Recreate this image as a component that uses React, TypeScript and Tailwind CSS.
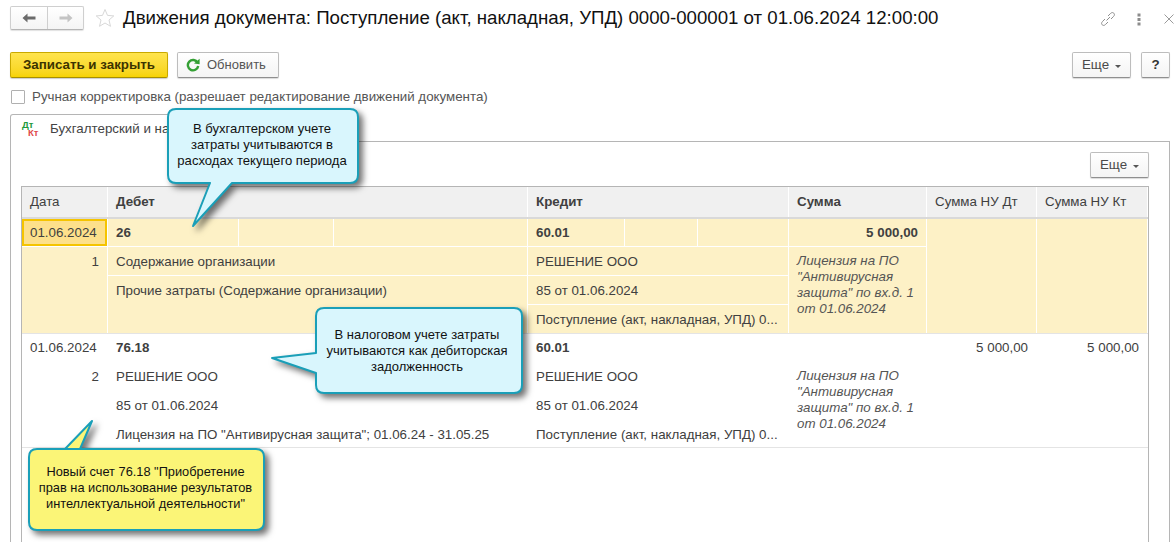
import React from "react";

const font = "[font-family:'Liberation_Sans',Arial,sans-serif]";

function Btn({ children, className = "" }: { children: React.ReactNode; className?: string }) {
  return (
    <div className={`flex h-[26px] items-center justify-center rounded-[2px] border border-[#bdbdbd] border-b-[#8f8f8f] bg-gradient-to-b from-white to-[#f4f4f4] text-[13.33px] text-[#4a4a4a] shadow-[0_1px_1px_rgba(0,0,0,0.15)] ${className}`}>
      {children}
    </div>
  );
}

function More({ className = "" }: { className?: string }) {
  return (
    <Btn className={`w-[59px] gap-[6px] ${className}`}>
      <span>Еще</span>
      <span className="mt-[2px] h-0 w-0 border-x-[3px] border-t-[3px] border-x-transparent border-t-[#555]" />
    </Btn>
  );
}

const Y = "bg-[#fdf1c6]";
const cellBase = "flex items-center px-[8px] text-[13.33px] text-[#404040] whitespace-nowrap overflow-hidden";

function Cell({ bg, className = "", children }: { bg: string; className?: string; children?: React.ReactNode }) {
  return <div className={`${cellBase} ${bg} ${className}`}>{children}</div>;
}

const cols = "grid grid-cols-[85px_419px_260px_137px_109px_110px] gap-x-px gap-y-px";

type RowData = {
  bg: string;
  rowsClass: string;
  num: string;
  date: React.ReactNode;
  debit: string;
  credit: string;
  sum: React.ReactNode;
  sumDt: string;
  sumKt: string;
  d: string[];
  c: string[];
  split: boolean;
};

function Note() {
  return (
    <p className="text-[13.33px] leading-[16px] italic text-[#555] whitespace-normal">
      Лицензия на ПО "Антивирусная защита" по вх.д. 1 от 01.06.2024
    </p>
  );
}

function Row({ r }: { r: RowData }) {
  const bg = r.bg;
  return (
    <div className={`${cols} ${r.rowsClass} border-b border-[#e4e4e4] bg-white`}>
      {r.date}
      {r.split ? (
        <div className="grid grid-cols-[130px_94px_193px] gap-x-px">
          <Cell bg={bg} className="font-bold">{r.debit}</Cell>
          <Cell bg={bg} />
          <Cell bg={bg} />
        </div>
      ) : (
        <Cell bg={bg} className="font-bold">{r.debit}</Cell>
      )}
      {r.split ? (
        <div className="grid grid-cols-[96px_72px_90px] gap-x-px">
          <Cell bg={bg} className="font-bold">{r.credit}</Cell>
          <Cell bg={bg} />
          <Cell bg={bg} />
        </div>
      ) : (
        <Cell bg={bg} className="font-bold">{r.credit}</Cell>
      )}
      {r.sum}
      {r.split ? (
        <>
          <Cell bg={bg} className="row-span-4" />
          <Cell bg={bg} className="row-span-4" />
        </>
      ) : (
        <>
          <Cell bg={bg} className="justify-end">{r.sumDt}</Cell>
          <Cell bg={bg} className="justify-end">{r.sumKt}</Cell>
        </>
      )}
      <Cell bg={bg} className="row-span-3 items-start justify-end pt-[5px]">{r.num}</Cell>
      <Cell bg={bg} className="col-start-2 pt-[2px]">{r.d[0]}</Cell>
      <Cell bg={bg} className="pt-[2px]">{r.c[0]}</Cell>
      <Cell bg={bg} className="row-span-3 col-start-4 items-start pt-[6px]"><Note /></Cell>
      {!r.split && <Cell bg={bg} className="row-span-3" />}
      {!r.split && <Cell bg={bg} className="row-span-3" />}
      {r.split ? (
        <Cell bg={bg} className="col-start-2 row-span-2 items-start pt-[5px]">{r.d[1]}</Cell>
      ) : (
        <Cell bg={bg} className="col-start-2 pt-[2px]">{r.d[1]}</Cell>
      )}
      <Cell bg={bg} className="col-start-3 pt-[2px]">{r.c[1]}</Cell>
      {!r.split && <Cell bg={bg} className="col-start-2 pt-[2px]">{r.d[2]}</Cell>}
      <Cell bg={bg} className="col-start-3 pt-[2px]">{r.c[2]}</Cell>
    </div>
  );
}

function Callout({ className, w, h, path, fill, children, textClass }: {
  className: string; w: number; h: number; path: string; fill: string; children: React.ReactNode; textClass: string;
}) {
  return (
    <div className={`absolute ${className}`}>
      <svg width={w} height={h} viewBox={`0 0 ${w} ${h}`} className="block overflow-visible drop-shadow-[4px_4px_3px_rgba(0,0,0,0.55)]">
        <path d={path} fill={fill} stroke="#1a9fb8" strokeWidth="2" strokeLinejoin="round" />
      </svg>
      <div className={`absolute text-center leading-[16.2px] text-[#111] ${textClass}`}>{children}</div>
    </div>
  );
}

export default function App() {
  const rows: RowData[] = [
    {
      bg: Y,
      rowsClass: "grid-rows-[27px_28px_28px_28px]",
      num: "1",
      date: (
        <div className="flex items-center border-2 border-[#f5c400] bg-[#fde08b] pl-[6px] text-[13.33px] text-[#404040]">01.06.2024</div>
      ),
      debit: "26",
      credit: "60.01",
      sum: <Cell bg={Y} className="justify-end font-bold">5 000,00</Cell>,
      sumDt: "",
      sumKt: "",
      d: ["Содержание организации", "Прочие затраты (Содержание организации)"],
      c: ["РЕШЕНИЕ ООО", "85 от 01.06.2024", "Поступление (акт, накладная, УПД) 0..."],
      split: true,
    },
    {
      bg: "bg-white",
      rowsClass: "grid-rows-[27px_28px_28px_27px]",
      num: "2",
      date: <Cell bg="bg-white">01.06.2024</Cell>,
      debit: "76.18",
      credit: "60.01",
      sum: <Cell bg="bg-white" />,
      sumDt: "5 000,00",
      sumKt: "5 000,00",
      d: ["РЕШЕНИЕ ООО", "85 от 01.06.2024", 'Лицензия на ПО "Антивирусная защита"; 01.06.24 - 31.05.25'],
      c: ["РЕШЕНИЕ ООО", "85 от 01.06.2024", "Поступление (акт, накладная, УПД) 0..."],
      split: false,
    },
  ];

  return (
    <div className={`relative h-[542px] w-[1176px] overflow-hidden bg-white ${font}`}>
      {/* title bar */}
      <header className="flex h-[36px] items-start pl-[10px] pt-[6px]">
        <div className="flex h-[24px] w-[74px] rounded-[2px] border border-[#cfcfcf] border-b-[#b5b5b5] bg-gradient-to-b from-white to-[#f4f4f4] shadow-[0_1px_1px_rgba(0,0,0,0.12)]">
          <div className="flex w-[37px] items-center justify-center border-r border-[#cfcfcf]">
            <svg width="14" height="10" viewBox="0 0 14 10"><path d="M0.5 5 L5.5 0.5 V3.4 H13.5 V6.6 H5.5 V9.5 Z" fill="#6b6b6b" /></svg>
          </div>
          <div className="flex flex-1 items-center justify-center">
            <svg width="14" height="10" viewBox="0 0 14 10"><path d="M13.5 5 L8.5 0.5 V3.4 H0.5 V6.6 H8.5 V9.5 Z" fill="#c4c4c4" /></svg>
          </div>
        </div>
        <svg width="20" height="20" viewBox="0 0 20 20" className="ml-[11px] mt-[2px]">
          <path d="M10 1.5 L12.5 7.4 L18.8 7.9 L14 12 L15.5 18.3 L10 15 L4.5 18.3 L6 12 L1.2 7.9 L7.5 7.4 Z" fill="none" stroke="#d8d8d8" strokeWidth="1" />
        </svg>
        <h1 className="ml-[8px] mt-[1px] whitespace-nowrap text-[18.67px] leading-[22px] font-normal text-[#111]">
          Движения документа: Поступление (акт, накладная, УПД) 0000-000001 от 01.06.2024 12:00:00
        </h1>
        <div className="ml-auto flex items-center pr-[2px] pt-[5px]">
          <svg width="16" height="16" viewBox="0 0 16 16" fill="none" stroke="#8f8f8f" strokeWidth="1">
            <path d="M6.5 9.5 L10 6 M5 8 L2.6 10.4 C1.2 11.8 1.4 13 2.2 13.8 C3 14.6 4.3 14.8 5.6 13.4 L8 11 M8 5 L10.4 2.6 C11.8 1.2 13 1.4 13.8 2.2 C14.6 3 14.8 4.3 13.4 5.6 L11 8" />
          </svg>
          <svg width="4" height="13" viewBox="0 0 4 13" fill="#8c8c8c" className="ml-[21px]"><rect x="0.5" y="0.5" width="3" height="3" /><rect x="0.5" y="5" width="3" height="3" /><rect x="0.5" y="9.5" width="3" height="3" /></svg>
          <svg width="10" height="10" viewBox="0 0 10 10" stroke="#9a9a9a" strokeWidth="1" className="ml-[23px]"><path d="M0.5 0.5 L9.5 9.5 M9.5 0.5 L0.5 9.5" /></svg>
        </div>
      </header>

      {/* toolbar */}
      <div className="mt-[16px] flex h-[26px] items-center pl-[10px] pr-[6px]">
        <div className="flex h-[26px] w-[158px] items-center justify-center rounded-[2px] border border-[#c9a900] border-b-[#a88f00] bg-gradient-to-b from-[#ffe44d] to-[#f7d300] text-[13.33px] font-bold text-[#3c3300] shadow-[0_1px_1px_rgba(0,0,0,0.2)]">
          Записать и закрыть
        </div>
        <Btn className="ml-[9px] w-[102px] justify-start gap-[7px] pl-[8px]">
          <svg width="14" height="14" viewBox="0 0 14 14" fill="none">
            <path d="M11.6 4.6 A5.2 5.2 0 1 0 12.2 8" stroke="#35a035" strokeWidth="2.4" />
            <path d="M8 5.6 L13.6 6.2 L13.6 0.8 Z" fill="#35a035" />
          </svg>
          <span className="text-[13px] text-[#555]">Обновить</span>
        </Btn>
        <More className="ml-auto" />
        <Btn className="ml-[10px] w-[29px] font-bold text-[#333]">?</Btn>
      </div>

      {/* manual checkbox */}
      <div className="mt-[10px] flex h-[18px] items-center gap-[7px] pl-[11px]">
        <span className="h-[14px] w-[14px] rounded-[1px] border border-[#b0b0b0] bg-white" />
        <span className="text-[13.33px] text-[#555]">Ручная корректировка (разрешает редактирование движений документа)</span>
      </div>

      {/* tab */}
      <div className="relative mt-[8px] -mb-px ml-[10px] flex h-[28px] w-[300px] items-center rounded-t-[3px] border border-b-0 border-[#b5b5b5] bg-white pl-[11px]">
        <span className="relative h-[16px] w-[20px] text-[9.5px] leading-[8px] font-bold">
          <span className="absolute left-0 top-0 text-[#1d9a3c]">Дт</span>
          <span className="absolute left-[6px] top-[8px] text-[#e04b4b]">Кт</span>
        </span>
        <span className="ml-[8px] whitespace-nowrap text-[13.33px] text-[#444]">Бухгалтерский и налоговый учет</span>
      </div>

      {/* panel */}
      <section className="ml-[10px] mr-[6px] h-[420px] border border-[#b5b5b5] pl-[10px] pr-[20px] pt-[10px]">
        <div className="flex justify-end pb-[8px]"><More /></div>
        <div className="h-[400px] border-x border-t border-[#b5b5b5]">
          <div className={`${cols} grid-rows-[30px] border-b-2 border-[#d9d9d9] bg-white`}>
            <Cell bg="bg-[#f0f0f0]">Дата</Cell>
            <Cell bg="bg-[#f0f0f0]" className="font-bold">Дебет</Cell>
            <Cell bg="bg-[#f0f0f0]" className="font-bold">Кредит</Cell>
            <Cell bg="bg-[#f0f0f0]" className="font-bold">Сумма</Cell>
            <Cell bg="bg-[#f0f0f0]">Сумма НУ Дт</Cell>
            <Cell bg="bg-[#f0f0f0]">Сумма НУ Кт</Cell>
          </div>
          {rows.map((r, i) => <Row key={i} r={r} />)}
        </div>
      </section>

      {/* callouts */}
      <Callout
        className="left-[168px] top-[108px]"
        w={190} h={120} fill="#d9f6fd"
        path="M8 1 H182 Q190 1 190 9 V67 Q190 75 182 75 H64 L25 118 L42 75 H8 Q0 75 0 67 V9 Q0 1 8 1 Z"
        textClass="-left-[1px] top-[13px] w-[190px] text-[13.1px]"
      >
        В бухгалтерском учете<br />затраты учитываются в<br />расходах текущего периода
      </Callout>
      <Callout
        className="left-[316px] top-[307px]"
        w={206} h={87} fill="#d9f6fd"
        path="M8 1 H198 Q206 1 206 9 V78 Q206 86 198 86 H8 Q0 86 0 78 V66 L-44 51 L0 46 V9 Q0 1 8 1 Z"
        textClass="-left-[2px] top-[20px] w-[206px] text-[13px]"
      >
        В налоговом учете затраты<br />учитываются как дебиторская<br />задолженность
      </Callout>
      <Callout
        className="left-[29px] top-[448px]"
        w={235} h={83} fill="#fbf577"
        path="M8 1 H227 Q235 1 235 9 V74 Q235 82 227 82 H8 Q0 82 0 74 V9 Q0 1 8 1 H36 L63 -27 L51 1 Z"
        textClass="-left-[1px] top-[16px] w-[235px] text-[12.8px]"
      >
        Новый счет 76.18 "Приобретение<br />прав на использование результатов<br />интеллектуальной деятельности"
      </Callout>
    </div>
  );
}
